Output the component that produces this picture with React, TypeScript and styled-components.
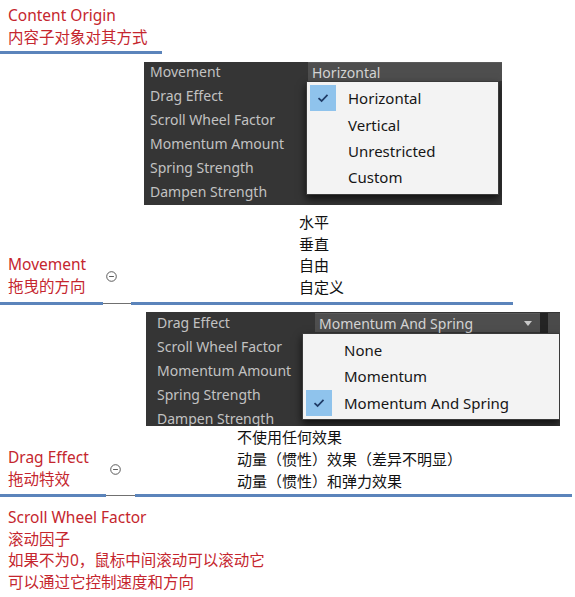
import React from "react";
import styled, { createGlobalStyle } from "styled-components";

const Global = createGlobalStyle`
  html, body { margin: 0; padding: 0; background: #ffffff; }
  body { font-family: "Noto Sans", "Noto Sans CJK SC", sans-serif; }
`;

const Page = styled.div`
  width: 575px;
  height: 597px;
  overflow: hidden;
  display: flex;
  flex-direction: column;
  background: #ffffff;
`;

const Header = styled.div`
  padding-top: 4px;
`;

const RedText = styled.div<{ $w?: number; $lh?: number }>`
  box-sizing: border-box;
  ${(p) => (p.$w ? `width: ${p.$w}px;` : "")}
  padding-left: 8px;
  color: #c5262e;
  font-family: "Noto Sans", "Noto Sans CJK SC", sans-serif;
  font-size: 15.5px;
  line-height: ${(p) => p.$lh ?? 22}px;
  white-space: nowrap;
`;

const Rule = styled.div<{ $mt: number }>`
  display: flex;
  align-items: center;
  height: 3px;
  margin-top: ${(p) => p.$mt}px;
`;

const BlueSeg = styled.div<{ $w: number }>`
  width: ${(p) => p.$w}px;
  height: 3px;
  background: #5b84bb;
`;

const ThinSeg = styled.div<{ $w: number }>`
  width: ${(p) => p.$w}px;
  height: 1px;
  background: #707070;
`;

const Panel = styled.div<{ $left: number; $width: number; $height: number; $mt: number; $pad: number; $top?: number }>`
  position: relative;
  box-sizing: border-box;
  margin-left: ${(p) => p.$left}px;
  margin-top: ${(p) => p.$mt}px;
  width: ${(p) => p.$width}px;
  height: ${(p) => p.$height}px;
  padding-left: ${(p) => p.$pad}px;
  padding-top: ${(p) => p.$top ?? 0}px;
  background: #353535;
  display: flex;
  flex-direction: column;
  overflow: hidden;
`;

const PropRow = styled.div`
  display: flex;
  align-items: flex-start;
  height: 24px;
  flex: none;
`;

const PropLabel = styled.div<{ $w: number }>`
  width: ${(p) => p.$w}px;
  flex: none;
  color: #c2c2c2;
  font-family: "Noto Sans", sans-serif;
  font-size: 14px;
  line-height: 19px;
  white-space: nowrap;
`;

const Field = styled.div<{ $w: number }>`
  position: relative;
  box-sizing: border-box;
  width: ${(p) => p.$w}px;
  height: 19px;
  padding-left: 4px;
  background: #4e4e4e;
  border-top: 1px solid #5a5a5a;
  color: #d4d4d4;
  font-family: "Noto Sans", sans-serif;
  font-size: 14px;
  line-height: 17px;
  white-space: nowrap;
  display: flex;
  align-items: center;
  justify-content: space-between;
`;

const Arrow = styled.div`
  width: 0;
  height: 0;
  margin-right: 8px;
  border-left: 4px solid transparent;
  border-right: 4px solid transparent;
  border-top: 5px solid #c8c8c8;
`;

const EdgeGap = styled.div`
  width: 8px;
  height: 21px;
  background: #242424;
  flex: none;
`;

const EdgeStrip = styled.div`
  width: 12px;
  height: 21px;
  background: #4a4a4a;
  flex: none;
`;

const Popup = styled.div<{ $x: number; $y: number; $w: number }>`
  position: absolute;
  left: ${(p) => p.$x}px;
  top: ${(p) => p.$y}px;
  width: ${(p) => p.$w}px;
  box-sizing: border-box;
  padding: 3px 0 3px 0;
  background: #f3f3f3;
  border: 1px solid #3a3a3a;
  box-shadow: 0 4px 8px rgba(0, 0, 0, 0.7);
  display: flex;
  flex-direction: column;
`;

const Item = styled.div`
  display: flex;
  align-items: center;
  height: 26.4px;
`;

const CheckSlot = styled.div<{ $on: boolean }>`
  width: 26px;
  height: 100%;
  margin-left: 3px;
  flex: none;
  display: flex;
  align-items: center;
  justify-content: center;
  background: ${(p) => (p.$on ? "#8fc3ec" : "transparent")};
`;

const ItemText = styled.span`
  margin-left: 12px;
  color: #161616;
  font-family: "Noto Sans", sans-serif;
  font-size: 15px;
  line-height: 20px;
  white-space: nowrap;
`;

const NoteRow = styled.div<{ $mt: number }>`
  display: flex;
  align-items: flex-end;
  margin-top: ${(p) => p.$mt}px;
`;

const NoteHead = styled.div`
  display: flex;
  align-items: center;
  margin-bottom: 1px;
`;

const NoteList = styled.div<{ $ml: number; $lh: number }>`
  margin-left: ${(p) => p.$ml}px;
  color: #111111;
  font-family: "Noto Sans", "Noto Sans CJK SC", sans-serif;
  font-size: 15px;
  line-height: ${(p) => p.$lh}px;
  white-space: nowrap;
`;

const Footer = styled.div`
  margin-top: 10px;
`;

const Check = () => (
  <svg width="12" height="10" viewBox="0 0 12 10">
    <path d="M1.5 5.2 L4.6 8 L10.5 1.8" fill="none" stroke="#1f3b66" strokeWidth="1.7" />
  </svg>
);

const MinusCircle = () => (
  <svg width="11" height="11" viewBox="0 0 11 11" style={{ flex: "none" }}>
    <circle cx="5.5" cy="5.5" r="4.8" fill="none" stroke="#4a4a4a" strokeWidth="0.9" />
    <line x1="3.1" y1="5.5" x2="7.9" y2="5.5" stroke="#4a4a4a" strokeWidth="0.9" />
  </svg>
);

type MenuProps = { x: number; y: number; w: number; items: string[]; selected: number };
const Menu = ({ x, y, w, items, selected }: MenuProps) => (
  <Popup $x={x} $y={y} $w={w}>
    {items.map((it, i) => (
      <Item key={it}>
        <CheckSlot $on={i === selected}>{i === selected && <Check />}</CheckSlot>
        <ItemText>{it}</ItemText>
      </Item>
    ))}
  </Popup>
);

const labels1 = ["Movement", "Drag Effect", "Scroll Wheel Factor", "Momentum Amount", "Spring Strength", "Dampen Strength"];
const labels2 = ["Drag Effect", "Scroll Wheel Factor", "Momentum Amount", "Spring Strength", "Dampen Strength"];

export default function App() {
  return (
    <Page>
      <Global />
      <Header>
        <RedText>Content Origin</RedText>
        <RedText>内容子对象对其方式</RedText>
      </Header>
      <Rule $mt={3}>
        <BlueSeg $w={162} />
      </Rule>

      <Panel $left={144} $width={358} $height={143} $mt={8} $pad={6}>
        {labels1.map((l, i) => (
          <PropRow key={l}>
            <PropLabel $w={158}>{l}</PropLabel>
            {i === 0 && <Field $w={194}>Horizontal</Field>}
          </PropRow>
        ))}
        <Menu x={162} y={19} w={193} items={["Horizontal", "Vertical", "Unrestricted", "Custom"]} selected={0} />
      </Panel>

      <NoteRow $mt={7}>
        <NoteHead>
          <RedText $w={106} $lh={21.7}>
            <div>Movement</div>
            <div>拖曳的方向</div>
          </RedText>
          <MinusCircle />
        </NoteHead>
        <NoteList $ml={182} $lh={21.7}>
          <div>水平</div>
          <div>垂直</div>
          <div>自由</div>
          <div>自定义</div>
        </NoteList>
      </NoteRow>
      <Rule $mt={3}>
        <BlueSeg $w={103} />
        <ThinSeg $w={28} />
        <BlueSeg $w={382} />
      </Rule>

      <Panel $left={146} $width={414} $height={114} $mt={7} $pad={11} $top={1.5}>
        {labels2.map((l, i) => (
          <PropRow key={l}>
            <PropLabel $w={158}>{l}</PropLabel>
            {i === 0 && (
              <>
                <Field $w={225}>
                  Momentum And Spring
                  <Arrow />
                </Field>
                <EdgeGap />
                <EdgeStrip />
              </>
            )}
          </PropRow>
        ))}
        <Menu x={156} y={21} w={258} items={["None", "Momentum", "Momentum And Spring"]} selected={2} />
      </Panel>

      <NoteRow $mt={0}>
        <NoteHead>
          <RedText $w={110} $lh={21.7}>
            <div>Drag Effect</div>
            <div>拖动特效</div>
          </RedText>
          <MinusCircle />
        </NoteHead>
        <NoteList $ml={116} $lh={22}>
          <div>不使用任何效果</div>
          <div>动量（惯性）效果（差异不明显）</div>
          <div>动量（惯性）和弹力效果</div>
        </NoteList>
      </NoteRow>
      <Rule $mt={2}>
        <BlueSeg $w={106} />
        <ThinSeg $w={29} />
        <BlueSeg $w={437} />
      </Rule>

      <Footer>
        <RedText $lh={21.7}>Scroll Wheel Factor</RedText>
        <RedText $lh={21.7}>滚动因子</RedText>
        <RedText $lh={21.7}>如果不为0，鼠标中间滚动可以滚动它</RedText>
        <RedText $lh={21.7}>可以通过它控制速度和方向</RedText>
      </Footer>
    </Page>
  );
}
